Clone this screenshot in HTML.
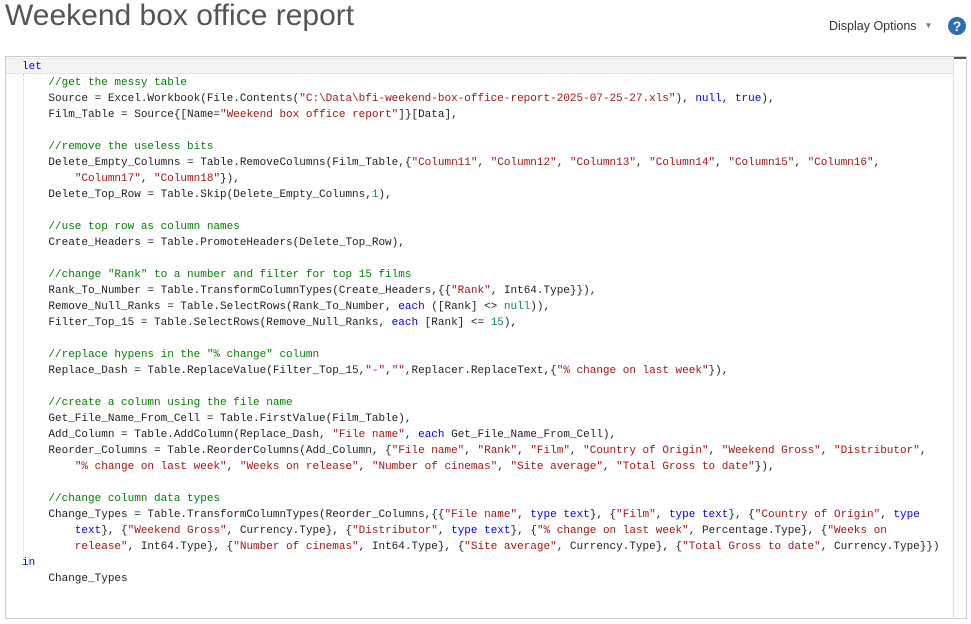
<!DOCTYPE html>
<html><head><style>
body{margin:0;width:971px;height:624px;background:#fff;position:relative;overflow:hidden;font-family:"Liberation Sans",sans-serif}
.t{position:absolute;left:5px;top:-1px;font-size:30px;color:#555;letter-spacing:0px}
.d{position:absolute;left:829px;top:19px;font-size:12.5px;color:#333}
.d span{font-size:8px;color:#777;margin-left:8px;position:relative;top:-2px}
.q{position:absolute;left:948px;top:17px;width:18px;height:18px;border-radius:50%;background:#2d6db5;color:#fff;font-weight:bold;font-size:14px;text-align:center;line-height:18px}
.box{position:absolute;left:5px;top:56px;width:962px;height:563px;border:1px solid #ccc;box-sizing:border-box}
.cur{position:absolute;left:6px;top:58px;width:947px;height:14px;background:#f4f4f4;border-top:1px solid #e6e6e6;border-bottom:1px solid #e6e6e6}
.sb{position:absolute;left:953px;top:57px;width:1px;height:562px;background:#ddd}
.sbt{position:absolute;left:954px;top:57px;width:12px;height:2px;background:#555}
.g{position:absolute;left:23px;top:74px;width:1px;height:484px;border-left:1px dotted #ccc}
pre{position:absolute;left:22px;top:59px;margin:0;font-family:"Liberation Mono",monospace;font-size:11px;line-height:16px;color:#1e1e1e}
.k{color:#0000ff}.c{color:#008000}.s{color:#a31515}.n{color:#09885a}
</style></head><body>
<div class="t">Weekend box office report</div>
<div class="d">Display Options<span>▼</span></div>
<div class="q">?</div>
<div class="box"></div>
<div class="cur"></div>
<div class="sb"></div><div class="sbt"></div>
<div class="g"></div>
<pre><span class="k">let</span>
    <span class="c">//get the messy table</span>
    Source = Excel.Workbook(File.Contents(<span class="s">"C:\Data\bfi-weekend-box-office-report-2025-07-25-27.xls"</span>), <span class="k">null</span>, <span class="k">true</span>),
    Film_Table = Source{[Name=<span class="s">"Weekend box office report"</span>]}[Data],

    <span class="c">//remove the useless bits</span>
    Delete_Empty_Columns = Table.RemoveColumns(Film_Table,{<span class="s">"Column11"</span>, <span class="s">"Column12"</span>, <span class="s">"Column13"</span>, <span class="s">"Column14"</span>, <span class="s">"Column15"</span>, <span class="s">"Column16"</span>,
        <span class="s">"Column17"</span>, <span class="s">"Column18"</span>}),
    Delete_Top_Row = Table.Skip(Delete_Empty_Columns,<span class="n">1</span>),

    <span class="c">//use top row as column names</span>
    Create_Headers = Table.PromoteHeaders(Delete_Top_Row),

    <span class="c">//change "Rank" to a number and filter for top 15 films</span>
    Rank_To_Number = Table.TransformColumnTypes(Create_Headers,{{<span class="s">"Rank"</span>, Int64.Type}}),
    Remove_Null_Ranks = Table.SelectRows(Rank_To_Number, <span class="k">each</span> ([Rank] &lt;&gt; <span class="n">null</span>)),
    Filter_Top_15 = Table.SelectRows(Remove_Null_Ranks, <span class="k">each</span> [Rank] &lt;= <span class="n">15</span>),

    <span class="c">//replace hypens in the "% change" column</span>
    Replace_Dash = Table.ReplaceValue(Filter_Top_15,<span class="s">"-"</span>,<span class="s">""</span>,Replacer.ReplaceText,{<span class="s">"% change on last week"</span>}),

    <span class="c">//create a column using the file name</span>
    Get_File_Name_From_Cell = Table.FirstValue(Film_Table),
    Add_Column = Table.AddColumn(Replace_Dash, <span class="s">"File name"</span>, <span class="k">each</span> Get_File_Name_From_Cell),
    Reorder_Columns = Table.ReorderColumns(Add_Column, {<span class="s">"File name"</span>, <span class="s">"Rank"</span>, <span class="s">"Film"</span>, <span class="s">"Country of Origin"</span>, <span class="s">"Weekend Gross"</span>, <span class="s">"Distributor"</span>,
        <span class="s">"% change on last week"</span>, <span class="s">"Weeks on release"</span>, <span class="s">"Number of cinemas"</span>, <span class="s">"Site average"</span>, <span class="s">"Total Gross to date"</span>}),

    <span class="c">//change column data types</span>
    Change_Types = Table.TransformColumnTypes(Reorder_Columns,{{<span class="s">"File name"</span>, <span class="k">type</span> <span class="k">text</span>}, {<span class="s">"Film"</span>, <span class="k">type</span> <span class="k">text</span>}, {<span class="s">"Country of Origin"</span>, <span class="k">type</span>
        <span class="k">text</span>}, {<span class="s">"Weekend Gross"</span>, Currency.Type}, {<span class="s">"Distributor"</span>, <span class="k">type</span> <span class="k">text</span>}, {<span class="s">"% change on last week"</span>, Percentage.Type}, {<span class="s">"Weeks on</span>
<span class="s">        release"</span>, Int64.Type}, {<span class="s">"Number of cinemas"</span>, Int64.Type}, {<span class="s">"Site average"</span>, Currency.Type}, {<span class="s">"Total Gross to date"</span>, Currency.Type}})
<span class="k">in</span>
    Change_Types</pre>
</body></html>
